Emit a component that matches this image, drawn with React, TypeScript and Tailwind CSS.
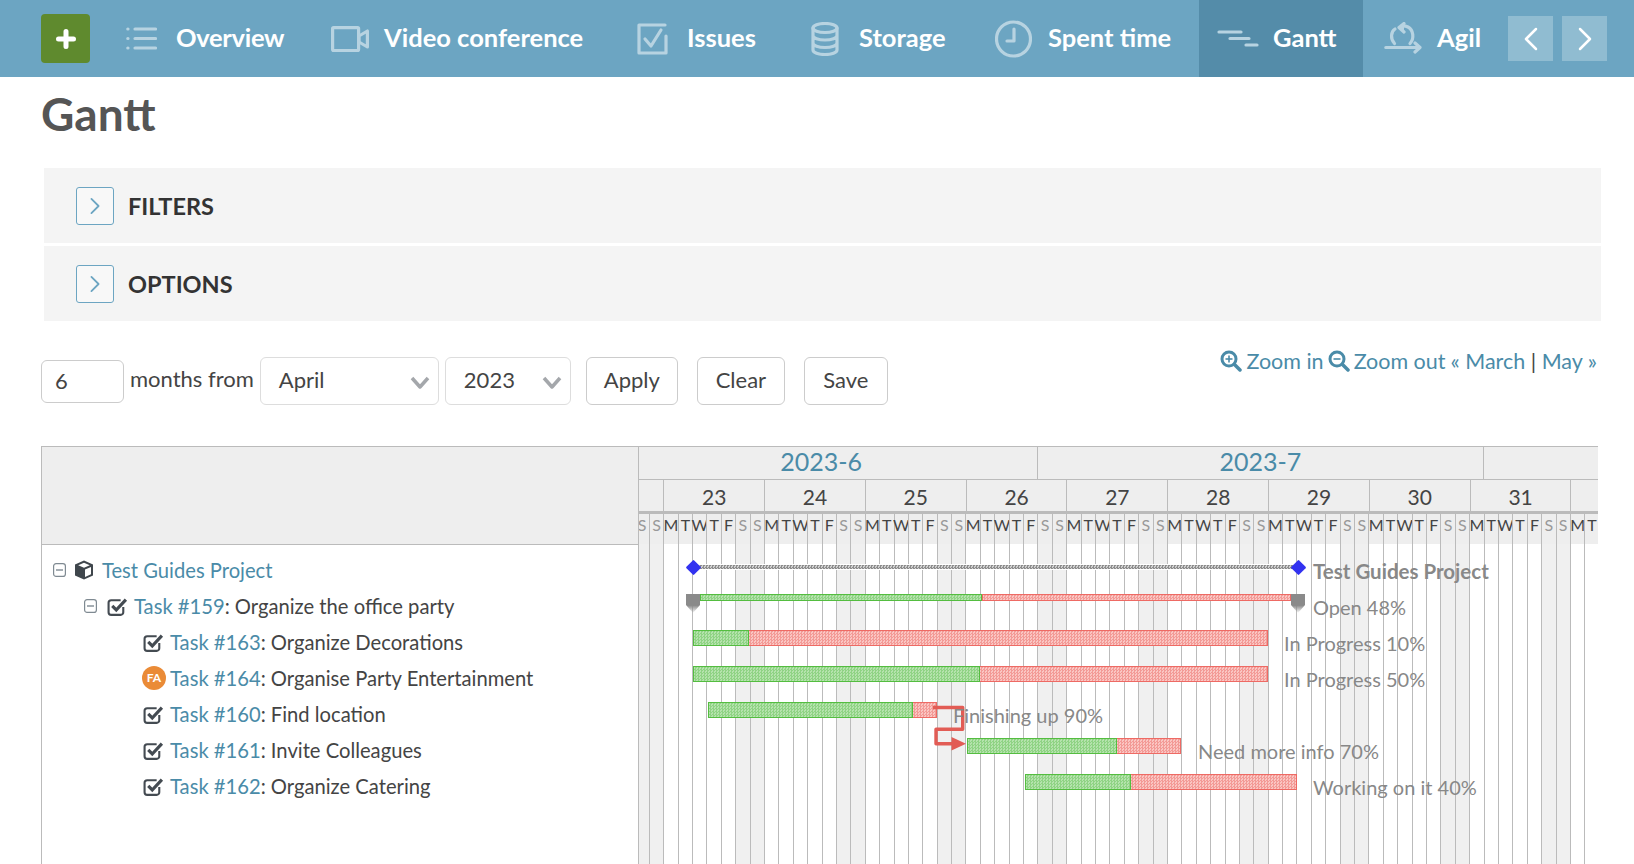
import React from "react";

const F = "font-['Lato','Liberation_Sans',sans-serif]";
const LINK = "text-[#4a8ba8]";

const DAY_W = 14.4;
const PANE_L = 639;
const PANE_T = 447;
const dayX = (i: number) => 24.3 + (i - 4) * DAY_W;
const LETTERS = ["M", "T", "W", "T", "F", "S", "S"];
const DAYS = Array.from({ length: 67 }, (_, k) => k + 2);
const WEEKS = Array.from({ length: 11 }, (_, k) => ({ start: -3 + k * 7, n: 22 + k }));
const MONTHS = [
  { label: "2023-6", days: 30 },
  { label: "2023-7", days: 31 },
  { label: "", days: 31 },
];

function NavIcon({ w, h, children }: { w: number; h: number; children: React.ReactNode }) {
  return (
    <svg width={w} height={h} viewBox={`0 0 ${w} ${h}`} fill="none" stroke="#b7d3e1" strokeWidth="3.2" strokeLinecap="round" strokeLinejoin="round" className="shrink-0">
      {children}
    </svg>
  );
}

function NavItem({ cls, label, icon, textCls }: { cls: string; label: string; icon: React.ReactNode; textCls: string }) {
  return (
    <div className={`flex items-center h-full ${cls}`}>
      {icon}
      <span className={`text-white text-[25.5px] font-bold whitespace-nowrap pb-[2px] ${textCls}`}>{label}</span>
    </div>
  );
}

function Chevron({ dir = "right", cls = "" }: { dir?: "left" | "right"; cls?: string }) {
  return (
    <svg width="14" height="24" viewBox="0 0 14 24" fill="none" stroke="currentColor" strokeWidth="2.5" strokeLinecap="round" strokeLinejoin="round" className={cls}>
      {dir === "right" ? <path d="M2 2l10 10L2 22" /> : <path d="M12 2L2 12l10 10" />}
    </svg>
  );
}

function Panel({ label, cls }: { label: string; cls: string }) {
  return (
    <div className={`flex items-center ml-[44px] w-[1557px] bg-[#f4f4f4] ${cls}`}>
      <div className="ml-[32px] w-[38px] h-[38px] flex items-center justify-center border border-[#6ca5c2] rounded-[3px] bg-[#f8f8f8] text-[#6ca5c2]">
        <Chevron cls="w-[10px] h-[18px]" />
      </div>
      <span className="ml-[14px] mt-[3px] text-[23.5px] font-bold text-[#333]">{label}</span>
    </div>
  );
}

function SelectBox({ label, cls }: { label: string; cls: string }) {
  return (
    <div className={`flex items-center justify-between h-[48px] border border-[#ddd] rounded-md px-[18px] pr-[8px] text-[22px] text-[#444] ${cls}`}>
      <span className="-mt-[3px]">{label}</span>
      <svg width="20" height="14" viewBox="0 0 20 14" fill="none" stroke="#a4a7ab" strokeWidth="3.5" strokeLinejoin="round" className="mt-[3px]">
        <path d="M2 2l8 9 8-9" />
      </svg>
    </div>
  );
}

function Btn({ label, cls }: { label: string; cls: string }) {
  return (
    <div className={`flex items-center justify-center h-[48px] pb-[3px] border border-[#ccc] rounded-md text-[22px] text-[#444] ${cls}`}>{label}</div>
  );
}

function ZoomIcon({ plus }: { plus: boolean }) {
  return (
    <svg width="22" height="22" viewBox="0 0 22 22" fill="none" stroke="#4a8ba8" className="shrink-0">
      <circle cx="9" cy="9" r="7" strokeWidth="3" />
      <path d="M14.5 14.5L20 20" strokeWidth="3.5" strokeLinecap="round" />
      <path d="M5.5 9h7" strokeWidth="1.6" />
      {plus && <path d="M9 5.5v7" strokeWidth="1.6" />}
    </svg>
  );
}

function Collapse({ cls }: { cls: string }) {
  return (
    <svg width="13" height="14" viewBox="0 0 13 14" fill="none" stroke="#7f8a92" strokeWidth="1.2" className={`shrink-0 ${cls}`}>
      <rect x="0.6" y="0.6" width="11.8" height="12.8" rx="2.5" />
      <path d="M3 7h7" strokeWidth="1.4" />
    </svg>
  );
}

function CheckIcon({ cls }: { cls: string }) {
  return (
    <svg width="21" height="21" viewBox="0 0 20 20" fill="none" className={`shrink-0 ${cls}`}>
      <path d="M15.5 10.5v5a2.5 2.5 0 0 1-2.5 2.5H4a2.5 2.5 0 0 1-2.5-2.5V6.5A2.5 2.5 0 0 1 4 4h9" stroke="#444b52" strokeWidth="2" />
      <path d="M5 9.5l3.8 3.800L18 3.500" stroke="#444b52" strokeWidth="3" />
    </svg>
  );
}

function Cube({ cls }: { cls: string }) {
  return (
    <svg width="20" height="20" viewBox="0 0 20 20" className={`shrink-0 ${cls}`}>
      <path d="M10 0.500l9 4v11l-9 4-9-4v-11z" fill="#3f464c" />
      <path d="M10 2.800l5.800 2.500L10 7.800 4.200 5.300z" fill="#fff" />
      <path d="M11 9.500l6-2.600v7.300l-6 2.700z" fill="#fff" />
    </svg>
  );
}

function TreeRow({ pad, icon, link, rest }: { pad: string; icon: React.ReactNode; link: string; rest?: string }) {
  return (
    <div className={`flex items-center h-[36px] whitespace-nowrap text-[20.2px] ${pad}`}>
      {icon}
      <span className={LINK}>{link}</span>
      {rest && <span className="text-[#444]">{rest}</span>}
    </div>
  );
}

const GREEN = "bg-[repeating-conic-gradient(#8fd384_0_25%,#b5e3ad_0_50%)] bg-[length:3px_3px] border-[#54bd40]";
const RED = "bg-[repeating-conic-gradient(#f39a96_0_25%,#fac6c3_0_50%)] bg-[length:3px_3px] border-[#ee6a64]";

const BARS = [
  { x: 693, g: 749, e: 1268, y: 630, h: 16 },
  { x: 693, g: 980, e: 1268, y: 666, h: 16 },
  { x: 708, g: 913, e: 937, y: 702, h: 16 },
  { x: 967, g: 1117, e: 1181, y: 738, h: 16 },
  { x: 1025, g: 1131, e: 1297, y: 774, h: 16 },
];

const LABELS = [
  { t: "Open 48%", x: 1313, y: 606.5 },
  { t: "In Progress 10%", x: 1284, y: 642.5 },
  { t: "In Progress 50%", x: 1284, y: 678.5 },
  { t: "Finishing up 90%", x: 953, y: 714.5 },
  { t: "Need more info 70%", x: 1198, y: 750.5 },
  { t: "Working on it 40%", x: 1313, y: 786.5 },
];

function Marker({ x }: { x: number }) {
  return (
    <svg width="14" height="19" viewBox="0 0 14 19" className="absolute" style={{ left: x - PANE_L, top: 594 - PANE_T }}>
      <defs>
        <linearGradient id={`mk${x}`} x1="0" y1="0" x2="0" y2="1">
          <stop offset="0.6" stopColor="#8a8a8a" />
          <stop offset="1" stopColor="#8a8a8a" stopOpacity="0" />
        </linearGradient>
      </defs>
      <path d="M0 0h14v11l-7 8-7-8z" fill={`url(#mk${x})`} />
    </svg>
  );
}

function Diamond({ x }: { x: number }) {
  return <div className="absolute w-[11px] h-[11px] rotate-45 rounded-[1px] bg-[#3232f0]" style={{ left: x - PANE_L - 5.5, top: 567 - PANE_T - 5.5 }} />;
}

function Chart() {
  return (
    <div className="absolute inset-0">
      <div className="absolute h-[6px] border-y border-white bg-[repeating-conic-gradient(#8c8c8c_0_25%,#cfcfcf_0_50%)] bg-[length:3px_3px]" style={{ left: 693 - PANE_L, top: 564 - PANE_T, width: 605 }} />
      <Diamond x={693} />
      <Diamond x={1298} />
      <div className={`absolute h-[7px] border ${GREEN}`} style={{ left: 700 - PANE_L, top: 594 - PANE_T, width: 282 }} />
      <div className={`absolute h-[7px] border ${RED}`} style={{ left: 982 - PANE_L, top: 594 - PANE_T, width: 309 }} />
      <Marker x={686} />
      <Marker x={1291} />
      {BARS.map((b) => (
        <React.Fragment key={b.y}>
          <div className={`absolute border ${GREEN}`} style={{ left: b.x - PANE_L, top: b.y - PANE_T, width: b.g - b.x, height: b.h }} />
          <div className={`absolute border border-l-0 ${RED}`} style={{ left: b.g - PANE_L, top: b.y - PANE_T, width: b.e - b.g, height: b.h }} />
        </React.Fragment>
      ))}
      <svg width="60" height="60" viewBox="925 700 60 60" className="absolute" style={{ left: 925 - PANE_L, top: 700 - PANE_T }}>
        <path d="M933 707.500h29.700v21.800H936v14.400h16" fill="none" stroke="#e25c55" strokeWidth="3.400" strokeLinejoin="round" />
        <path d="M951.500 737l14.500 6.700-14.500 6.800z" fill="#e25c55" />
      </svg>
      <span className="absolute whitespace-nowrap text-[20.5px] font-bold text-[#888] leading-none -translate-y-1/2" style={{ left: 1313 - PANE_L, top: 571 - PANE_T }}>
        Test Guides Project
      </span>
      {LABELS.map((l) => (
        <span key={l.t} className="absolute whitespace-nowrap text-[20px] text-[#888] leading-none -translate-y-1/2" style={{ left: l.x - PANE_L, top: l.y - PANE_T }}>
          {l.t}
        </span>
      ))}
    </div>
  );
}

export default function App() {
  return (
    <div className={`w-[1634px] h-[864px] overflow-hidden bg-white ${F}`}>
      <nav className="flex items-center h-[77px] bg-[#6ca5c2]">
        <div className="ml-[41px] w-[49px] h-[49px] flex items-center justify-center rounded-[4px] bg-[#5f8a2e]">
          <svg width="20" height="20" viewBox="0 0 20 20" stroke="#fff" strokeWidth="5" strokeLinecap="round"><path d="M10 2.500v15M2.500 10h15" /></svg>
        </div>
        <NavItem cls="ml-[36px]" textCls="ml-[19px] w-[110px] tracking-[-0.3px]" label="Overview" icon={
          <NavIcon w={31} h={25}>
            <path d="M1.800 3h.2M1.800 12.500h.2M1.800 22h.2M9 3h20.500M9 12.500h20.500M9 22h20.500" />
          </NavIcon>} />
        <NavItem cls="ml-[45px]" textCls="ml-[15px] w-[210px]" label="Video conference" icon={
          <NavIcon w={38} h={26}>
            <rect x="1.600" y="1.600" width="26" height="23" rx="1" />
            <path d="M28 10l8.400-5v16L28 16z" />
          </NavIcon>} />
        <NavItem cls="ml-[43px]" textCls="ml-[19px] w-[75px]" label="Issues" icon={
          <NavIcon w={31} h={32}>
            <path d="M29 13v17H2V2h26" />
            <path d="M8 16l6 7L24 7" />
          </NavIcon>} />
        <NavItem cls="ml-[49px]" textCls="ml-[20px] w-[95px]" label="Storage" icon={
          <NavIcon w={28} h={34}>
            <ellipse cx="14" cy="6" rx="12" ry="4.500" />
            <path d="M2 6v22c0 2.500 5.400 4.500 12 4.500s12-2 12-4.500V6M2 13.500c0 2.500 5.400 4.500 12 4.500s12-2 12-4.500M2 21c0 2.500 5.400 4.500 12 4.500s12-2 12-4.500" />
          </NavIcon>} />
        <NavItem cls="ml-[41px]" textCls="ml-[16px] w-[130px]" label="Spent time" icon={
          <NavIcon w={37} h={38}>
            <circle cx="18.500" cy="19" r="17" />
            <path d="M19 9v12h-7" />
          </NavIcon>} />
        <NavItem cls="ml-[21px] w-[164px] bg-[#548ca9] pl-[18px]" textCls="ml-[14px]" label="Gantt" icon={
          <NavIcon w={42} h={17}>
            <path d="M2 2h22M13 8.500h19M29 15h11" />
          </NavIcon>} />
        <NavItem cls="ml-[21px]" textCls="ml-[15px] w-[50px]" label="Agil" icon={
          <NavIcon w={38} h={33}>
            <path d="M10.500 21.500C6 16.500 7 9.500 11 7M26 21.500c4.500-5 3.500-13.500-2-16.500-2.200-1-4.500-1.200-6.500-1" />
            <path d="M20 1.500L15 5.500l5 4.500" fill="#b7d3e1" />
            <path d="M1.800 25.500h33M31 21l5 4.500-5 4.500" />
          </NavIcon>} />
        <div className="ml-[21px] w-[45px] h-[45px] shrink-0 flex items-center justify-center bg-[#90bcd1] text-white"><Chevron dir="left" /></div>
        <div className="ml-[9px] w-[45px] h-[45px] shrink-0 flex items-center justify-center bg-[#90bcd1] text-white"><Chevron /></div>
      </nav>

      <h1 className="ml-[41px] mt-[9px] h-[56px] text-[46px] leading-[56px] font-bold text-[#555]">Gantt</h1>

      <Panel label="FILTERS" cls="mt-[26px] h-[75px]" />
      <Panel label="OPTIONS" cls="mt-[3px] h-[75px]" />

      <div className="flex items-start mt-[36px] h-[89px]">
        <div className="ml-[41px] mt-[3px] w-[83px] h-[43px] flex items-center pl-[13px] pb-[2px] border border-[#ccc] rounded-md text-[22px] text-[#444]">6</div>
        <span className="ml-[6px] mt-[5px] text-[22px] text-[#444] whitespace-nowrap">months from</span>
        <SelectBox label="April" cls="ml-[6px] w-[179px]" />
        <SelectBox label="2023" cls="ml-[6px] w-[126px]" />
        <Btn label="Apply" cls="ml-[15px] w-[92px]" />
        <Btn label="Clear" cls="ml-[19px] w-[88px]" />
        <Btn label="Save" cls="ml-[19px] w-[84px]" />
        <div className={`ml-auto mr-[37px] -mt-[12px] flex items-center gap-[4px] text-[21.5px] whitespace-nowrap ${LINK}`}>
          <ZoomIcon plus /><span>Zoom in</span>
          <ZoomIcon plus={false} /><span className="mr-[1px]">Zoom out</span>
          <span>« March <span className="text-[#444]">|</span> May »</span>
        </div>
      </div>

      <div className="flex ml-[41px] w-[1557px] h-[420px] border-t border-[#bbb]">
        <div className="w-[598px] shrink-0 border-x border-[#bbb]">
          <div className="h-[98px] bg-[#eee] border-b border-[#bbb]" />
          <div className="pt-[7px]">
            <TreeRow pad="pl-[11px]" icon={<><Collapse cls="mr-[8px]" /><Cube cls="mr-[8px]" /></>} link="Test Guides Project" />
            <TreeRow pad="pl-[42px]" icon={<><Collapse cls="mr-[10px]" /><CheckIcon cls="mr-[6px]" /></>} link="Task #159" rest=": Organize the office party" />
            <TreeRow pad="pl-[101px]" icon={<CheckIcon cls="mr-[6px]" />} link="Task #163" rest=": Organize Decorations" />
            <TreeRow pad="pl-[100px]" icon={
              <div className="w-[24px] h-[24px] mr-[4px] shrink-0 rounded-full bg-[#ea8b37] text-white text-[12px] font-bold flex items-center justify-center">FA</div>
            } link="Task #164" rest=": Organise Party Entertainment" />
            <TreeRow pad="pl-[101px]" icon={<CheckIcon cls="mr-[6px]" />} link="Task #160" rest=": Find location" />
            <TreeRow pad="pl-[101px]" icon={<CheckIcon cls="mr-[6px]" />} link="Task #161" rest=": Invite Colleagues" />
            <TreeRow pad="pl-[101px]" icon={<CheckIcon cls="mr-[6px]" />} link="Task #162" rest=": Organize Catering" />
          </div>
        </div>

        <div className="relative flex-1 overflow-hidden">
          <div className="flex h-[33px] bg-[#eee] border-b border-[#bbb] w-[3000px]" style={{ marginLeft: dayX(0) }}>
            {MONTHS.map((m) => (
              <div key={m.days + m.label} className={`shrink-0 h-full border-r border-[#bbb] text-center text-[25px] leading-[29px] ${LINK}`} style={{ width: m.days * DAY_W }}>
                {m.label}
              </div>
            ))}
          </div>
          <div className="flex h-[34px] w-[3000px]" style={{ marginLeft: dayX(-3) }}>
            {WEEKS.map((w) => (
              <div key={w.n} className="shrink-0 h-full bg-[#eee] border-l border-b-[3px] border-[#bbb] text-center text-[21px] leading-[33px] text-[#444]" style={{ width: 7 * DAY_W }}>
                {w.n === 22 || w.n > 31 ? "" : w.n}
              </div>
            ))}
          </div>
          <div className="flex h-[500px] w-[3000px]" style={{ marginLeft: dayX(2) }}>
            {DAYS.map((i) => {
              const wd = (i + 3) % 7;
              const off = wd > 4;
              const d = LETTERS[wd];
              return (
                <div key={i} className={`shrink-0 h-full border-l border-[#bbb] ${off ? "bg-[#f0f0f0]" : "bg-white"}`} style={{ width: DAY_W }}>
                  <div className={`h-[30px] bg-[#eee] flex justify-center text-[16px] leading-[22px] ${off ? "text-[#999]" : "text-[#444]"}`}>{d}</div>
                </div>
              );
            })}
          </div>
          <Chart />
        </div>
      </div>
    </div>
  );
}
